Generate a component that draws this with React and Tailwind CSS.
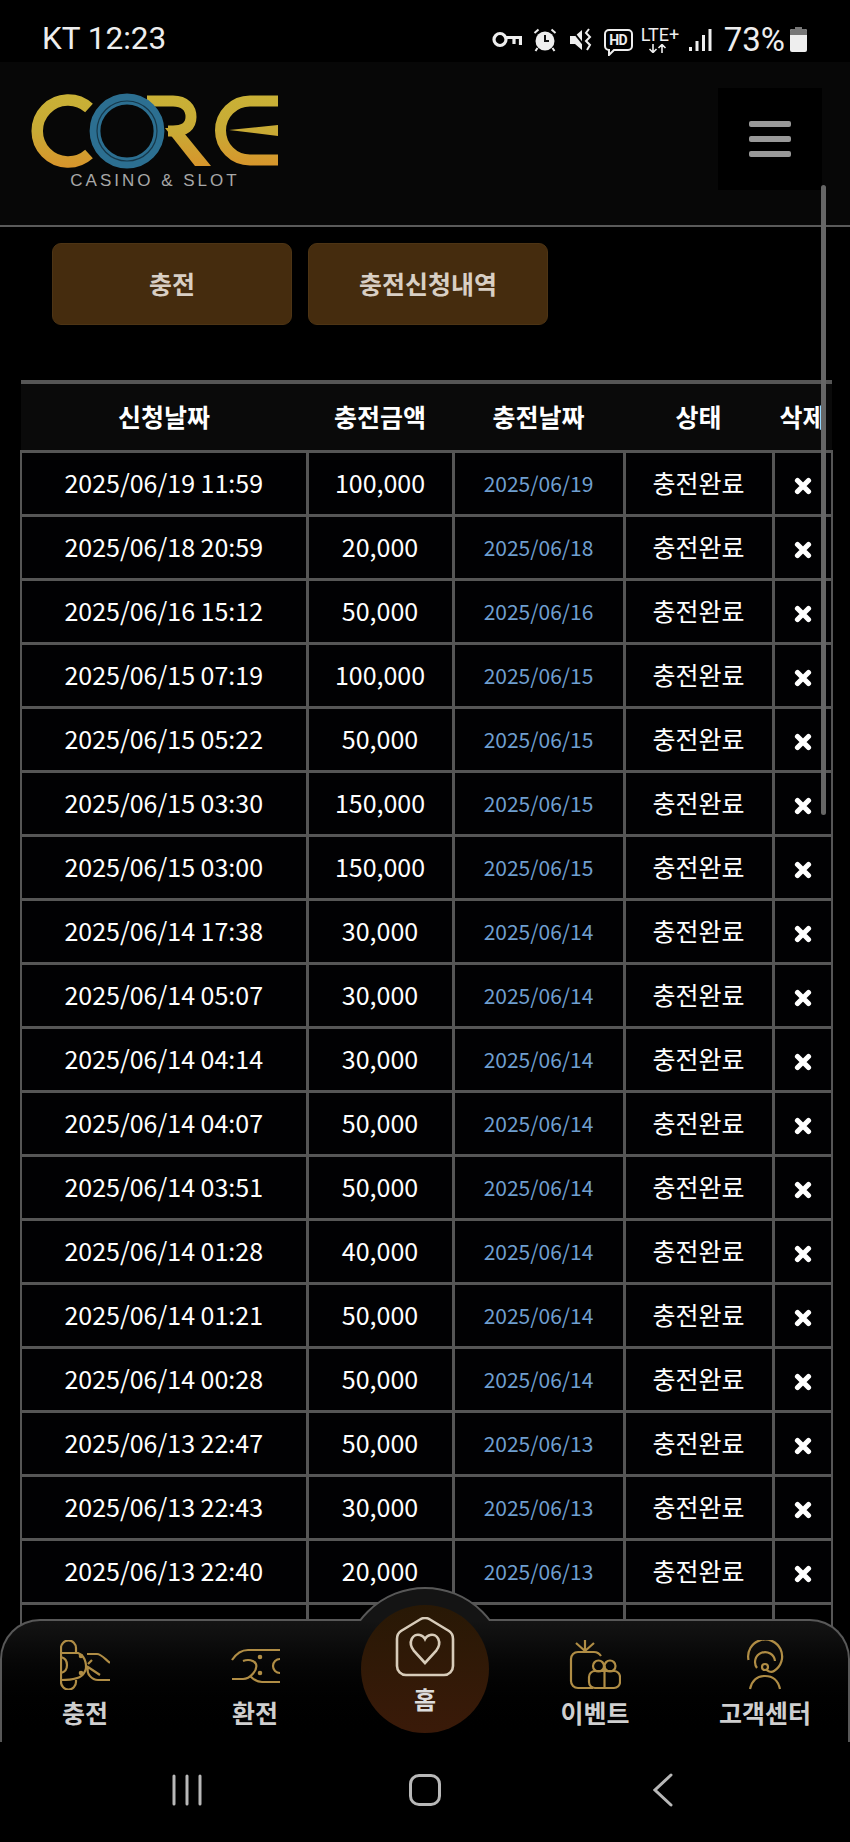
import React from 'react';

const rows = [
  ['2025/06/19 11:59', '100,000', '2025/06/19'],
  ['2025/06/18 20:59', '20,000', '2025/06/18'],
  ['2025/06/16 15:12', '50,000', '2025/06/16'],
  ['2025/06/15 07:19', '100,000', '2025/06/15'],
  ['2025/06/15 05:22', '50,000', '2025/06/15'],
  ['2025/06/15 03:30', '150,000', '2025/06/15'],
  ['2025/06/15 03:00', '150,000', '2025/06/15'],
  ['2025/06/14 17:38', '30,000', '2025/06/14'],
  ['2025/06/14 05:07', '30,000', '2025/06/14'],
  ['2025/06/14 04:14', '30,000', '2025/06/14'],
  ['2025/06/14 04:07', '50,000', '2025/06/14'],
  ['2025/06/14 03:51', '50,000', '2025/06/14'],
  ['2025/06/14 01:28', '40,000', '2025/06/14'],
  ['2025/06/14 01:21', '50,000', '2025/06/14'],
  ['2025/06/14 00:28', '50,000', '2025/06/14'],
  ['2025/06/13 22:47', '50,000', '2025/06/13'],
  ['2025/06/13 22:43', '30,000', '2025/06/13'],
  ['2025/06/13 22:40', '20,000', '2025/06/13'],
];

const StatusIcons = () => (
  <div className="flex items-center">
    {/* key */}
    <svg width="30" height="18" viewBox="0 0 30 18" fill="none" stroke="#eee" strokeWidth="3.2" className="mr-[11px]">
      <circle cx="8" cy="8.5" r="6" />
      <path d="M14 6.5 H28.5 V14 M22 6.5 V13" />
    </svg>
    {/* alarm */}
    <svg width="24" height="24" viewBox="0 0 24 24" className="mr-[12px]">
      <circle cx="12" cy="13" r="9.5" fill="#eee" />
      <path d="M12 7 V13 H16" fill="none" stroke="#111" strokeWidth="2" />
      <path d="M1.5 5 L5.5 1.5 M22.5 5 L18.5 1.5 M4.5 20 L2.5 23 M19.5 20 L21.5 23" stroke="#eee" strokeWidth="2" />
    </svg>
    {/* vibrate mute */}
    <svg width="24" height="24" viewBox="0 0 24 24" className="mr-[11px]">
      <path d="M1 8 H6 L13 2 V22 L6 16 H1 Z" fill="#eee" />
      <path d="M2 1 L18 21" stroke="#000" strokeWidth="2" />
      <path d="M20 1 L17 5 L21 9 L17 13 L21 17 L18 22" fill="none" stroke="#eee" strokeWidth="2" />
    </svg>
    {/* hd bubble */}
    <div className="relative mr-[8px] flex h-[22px] w-[29px] items-center justify-center rounded-[5px] border-2 border-[#eee] text-[14px] leading-none font-bold tracking-[-0.5px] text-[#eee]">
      HD
      <svg width="9" height="7" viewBox="0 0 9 7" className="absolute -bottom-[7px] left-[2px]">
        <path d="M1 0 V6 L7 0" fill="#000" stroke="#eee" strokeWidth="2" />
      </svg>
    </div>
    {/* lte */}
    <div className="mr-[8px] flex w-[40px] flex-col items-start">
      <span className="h-[16px] text-[18px] leading-[16px] text-[#eee]">LTE+</span>
      <svg width="20" height="9" viewBox="0 0 20 9" className="mt-[1px] ml-[7px]" fill="none" stroke="#eee" strokeWidth="1.6">
        <path d="M5 0 V8 M1.5 5 L5 8.5 L8.5 5 M14 9 V1 M10.5 4 L14 0.5 L17.5 4" />
      </svg>
    </div>
    {/* signal */}
    <svg width="23" height="24" viewBox="0 0 23 24" className="mr-[12px]" fill="#eee">
      <rect x="0" y="19" width="3" height="4" />
      <rect x="6.5" y="13" width="3" height="10" />
      <rect x="13" y="7" width="3" height="16" />
      <rect x="19.5" y="1" width="3" height="22" />
    </svg>
    <span className="mr-[5px] text-[33px] leading-none text-[#eee]">73%</span>
    {/* battery */}
    <svg width="17" height="25" viewBox="0 0 17 25">
      <rect x="5" y="0" width="7" height="3" fill="#777" />
      <rect x="0" y="2" width="17" height="23" rx="2" fill="#eee" />
      <path d="M0 8 V4 a2 2 0 0 1 2 -2 H15 a2 2 0 0 1 2 2 V8 Z" fill="#777" />
    </svg>
  </div>
);

const Logo = () => (
  <div className="flex w-[260px] flex-col items-center">
    <svg width="260" height="88" viewBox="0 0 260 88" fill="none">
      <defs>
        <linearGradient id="gold" gradientUnits="userSpaceOnUse" x1="0" y1="6" x2="0" y2="80">
          <stop offset="0" stopColor="#c9b136" />
          <stop offset="0.5" stopColor="#c8aa35" />
          <stop offset="1" stopColor="#d8942b" />
        </linearGradient>
      </defs>
      {/* C */}
      <path d="M64 20 A31 31 0 1 0 64 66" stroke="url(#gold)" strokeWidth="11.5" />
      {/* R */}
      <path d="M122 13 H148 C160 13 166 20 166 29 C166 38 160 43 148 43 H143" stroke="url(#gold)" strokeWidth="11" />
      <path d="M140 40 H155 L186 78 H170 Z" fill="url(#gold)" />
      {/* E */}
      <path d="M253 13 H225 A29.5 29.5 0 0 0 225 72 H253" stroke="url(#gold)" strokeWidth="11" />
      <path d="M204 42 L253 37 V48 Z" fill="url(#gold)" />
      {/* O */}
      <circle cx="102" cy="43" r="32" stroke="#2c6f91" strokeWidth="10.8" />
      <circle cx="102" cy="43" r="30" stroke="#16384a" strokeWidth="1.2" />
    </svg>
    <span className="-mt-[3px] font-['Liberation_Sans',sans-serif] text-[17px] leading-[16px] tracking-[3px] text-[#a8a8a8]">
      CASINO &amp; SLOT
    </span>
  </div>
);

const CloseMark = () => (
  <svg width="18" height="18" viewBox="0 0 18 18" className="mx-auto mt-[6px] block" stroke="#fff" strokeWidth="5.2" strokeLinecap="round">
    <path d="M3.5 3.5 L14.5 14.5 M14.5 3.5 L3.5 14.5" />
  </svg>
);

const HistoryTable = () => (
  <table className="ml-[20px] w-[811px] table-fixed border-collapse text-center text-[25px] text-white">
    <colgroup>
      <col className="w-[286px]" />
      <col className="w-[146px]" />
      <col className="w-[171px]" />
      <col className="w-[149px]" />
      <col className="w-[59px]" />
    </colgroup>
    <thead>
      <tr className="h-[69px] border-t-4 border-b-[3px] border-[#565656] bg-[#0a0a0a] font-bold">
        <th className="font-bold">신청날짜</th>
        <th className="font-bold">충전금액</th>
        <th className="font-bold">충전날짜</th>
        <th className="font-bold">상태</th>
        <th className="font-bold">삭제</th>
      </tr>
    </thead>
    <tbody>
      {rows.map((row) => (
        <tr key={row[0]} className="h-[64px]">
          <td className="border-[3px] border-l-2 border-[#565656] bg-[#010103]">{row[0]}</td>
          <td className="border-[3px] border-[#565656] bg-[#010103]">{row[1]}</td>
          <td className="border-[3px] border-[#565656] bg-[#010103] pt-[2px] text-[21px] text-[#6f9fd0]">{row[2]}</td>
          <td className="border-[3px] border-[#565656] bg-[#010103]">충전완료</td>
          <td className="border-[3px] border-r-2 border-[#565656] bg-[#010103]"><CloseMark /></td>
        </tr>
      ))}
      <tr className="h-[64px]">
        <td className="border-[3px] border-l-2 border-[#565656]" />
        <td className="border-[3px] border-[#565656]" />
        <td className="border-[3px] border-[#565656]" />
        <td className="border-[3px] border-[#565656]" />
        <td className="border-[3px] border-r-2 border-[#565656]" />
      </tr>
    </tbody>
  </table>
);

const NavItem = ({ label, children }) => (
  <div className="flex flex-col items-center">
    <div className="flex h-[50px] items-center justify-center">{children}</div>
    <span className="mt-[8px] text-[25px] leading-[28px] font-bold text-[#cfcfcf]">{label}</span>
  </div>
);

const gold = '#b08d45';

const BottomNav = () => (
  <div className="absolute right-0 bottom-0 left-0">
    <div className="relative h-[123px] rounded-t-[40px] border-x-2 border-t-2 border-[#585858] bg-gradient-to-b from-[#141414] to-black">
      {/* dome behind home button */}
      <div className="absolute -top-[34px] left-[341px] h-[34px] w-[164px] overflow-hidden">
        <div className="h-[164px] w-[164px] rounded-full border-2 border-[#585858] bg-[#141414]" />
      </div>
      <div className="-mx-[2px] grid grid-cols-5 pt-[19px]">
        <NavItem label="충전">
          <svg width="50" height="50" viewBox="0 0 50 50" fill="none" stroke={gold} strokeWidth="2.2">
            <path d="M1 13 V8 a7.5 7.5 0 0 1 15 0 V13" />
            <path d="M1 40 V42 a7.5 7.5 0 0 0 15 0 V40" />
            <path d="M1 13 V40" />
            <path d="M1 13 H18 C26 16 28 28 24 33 C22 37 16 40 1 40" />
            <path d="M1 17 C9 19 9 31 1 33" />
            <path d="M27 14 H37 C41 14 44 18 50 23" />
            <path d="M50 40 H38 C32 40 26 34 28 27 L40 35 M28 24 L32 20" />
            <circle cx="21" cy="16" r="1.2" fill={gold} />
            <circle cx="21" cy="33" r="1.2" fill={gold} />
          </svg>
        </NavItem>
        <NavItem label="환전">
          <svg width="50" height="50" viewBox="0 0 50 50" fill="none" stroke={gold} strokeWidth="2.2">
            <path d="M2 20 C6 14 12 10 18 10 H50" />
            <path d="M2 39 H13 C20 39 28 30 26 24 C24 20 18 19 13 21" />
            <path d="M50 42 H32 C27 42 24 40 20 36" />
            <path d="M50 19 A7 7 0 1 0 50 33" />
            <circle cx="30" cy="17" r="1.2" fill={gold} />
            <circle cx="30" cy="33" r="1.2" fill={gold} />
          </svg>
        </NavItem>
        <div />
        <NavItem label="이벤트">
          <svg width="52" height="50" viewBox="0 0 52 50" fill="none" stroke={gold} strokeWidth="2.2">
            <path d="M32 16 C30 13 28 12 25 12 H9 C5 12 2 15 2 19 V41 C2 45 5 48 9 48 H24" />
            <path d="M16 11 L7 3 M16 11 V0 M16 11 L25 3" />
            <rect x="20" y="31" width="31" height="17" rx="6" />
            <path d="M35.5 26 V48" />
            <circle cx="29.5" cy="26" r="5.5" />
            <circle cx="41" cy="26" r="5.5" />
          </svg>
        </NavItem>
        <NavItem label="고객센터">
          <svg width="42" height="50" viewBox="0 0 42 50" fill="none" stroke={gold} strokeWidth="2.2">
            <path d="M4.5 20 A17 17 0 1 1 30 31 C27 33 23 31 22 29" />
            <path d="M13 28 A10 10 0 1 1 31 21" />
            <circle cx="21" cy="27" r="3" />
            <path d="M6 49 C8 40 14 36 21 36 C28 36 34 40 36 49" />
          </svg>
        </NavItem>
      </div>
      {/* home button */}
      <div className="absolute -top-[16px] left-[359px] flex h-[128px] w-[128px] flex-col items-center rounded-full bg-gradient-to-b from-[#281805] to-[#3a1a09] pt-[12px]">
        <svg width="60" height="60" viewBox="0 0 60 60" fill="none" stroke="#d8ccba" strokeWidth="2.6">
          <path d="M25 2.5 C28 0.7 32 0.7 35 2.5 L54 14 C57 16 58 18 58 22 V49 C58 54 54 58 49 58 H11 C6 58 2 54 2 49 V22 C2 18 3 16 6 14 Z" />
          <path d="M30 46 L19 34 C12 25 18 16 25 18 C27 18.5 29 20 30 22 C31 20 33 18.5 35 18 C42 16 48 25 41 34 Z" />
        </svg>
        <span className="mt-[8px] text-[24px] leading-[28px] font-bold text-[#dcdcdc]">홈</span>
      </div>
    </div>
    {/* android nav */}
    <div className="flex h-[100px] items-center justify-center bg-black pb-[4px]">
      <div className="flex w-[238px] justify-center">
        <svg width="30" height="32" viewBox="0 0 30 32" stroke="#b8b8b8" strokeWidth="3" strokeLinecap="round">
          <path d="M2 2 V30 M15 2 V30 M28 2 V30" />
        </svg>
      </div>
      <div className="flex w-[238px] justify-center">
        <div className="h-[32px] w-[32px] rounded-[10px] border-[3px] border-[#b8b8b8]" />
      </div>
      <div className="flex w-[238px] justify-center">
        <svg width="20" height="34" viewBox="0 0 20 34" fill="none" stroke="#b8b8b8" strokeWidth="3" strokeLinecap="round">
          <path d="M18 2 L2 17 L18 32" />
        </svg>
      </div>
    </div>
  </div>
);

export default function App() {
  return (
    <div className="relative h-[1842px] w-[850px] overflow-hidden bg-black font-['Noto_Sans_CJK_KR','Noto_Sans',sans-serif]">
      <div className="flex h-[62px] items-start justify-between bg-black pt-[23px] pr-[43px] pl-[42px] font-['Roboto',sans-serif]">
        <span className="text-[31.5px] leading-[32px] text-[#eee]">KT 12:23</span>
        <StatusIcons />
      </div>
      <header className="flex h-[165px] items-start justify-between border-b-2 border-[#5a5a5a] bg-[#070707] pt-[26px] pr-[28px] pl-[25px]">
        <Logo />
        <div className="flex h-[102px] w-[104px] flex-col items-center justify-center gap-[9px] bg-black">
          <span className="h-[6px] w-[42px] rounded-[2px] bg-[#999]" />
          <span className="h-[6px] w-[42px] rounded-[2px] bg-[#999]" />
          <span className="h-[6px] w-[42px] rounded-[2px] bg-[#999]" />
        </div>
      </header>
      <div className="flex gap-[16px] pt-[16px] pl-[52px]">
        <button className="h-[82px] w-[240px] rounded-[9px] border border-[#4d3414] bg-[#452c0e] text-[25px] font-bold text-[#d8cfc4]">충전</button>
        <button className="h-[82px] w-[240px] rounded-[9px] border border-[#4d3414] bg-[#452c0e] text-[25px] font-bold text-[#d8cfc4]">충전신청내역</button>
      </div>
      <div className="mt-[55px]">
        <HistoryTable />
      </div>
      {/* page scrollbar */}
      <div className="absolute top-[185px] left-[821px] h-[630px] w-[5px] rounded-full bg-[#666]" />
      <BottomNav />
    </div>
  );
}
